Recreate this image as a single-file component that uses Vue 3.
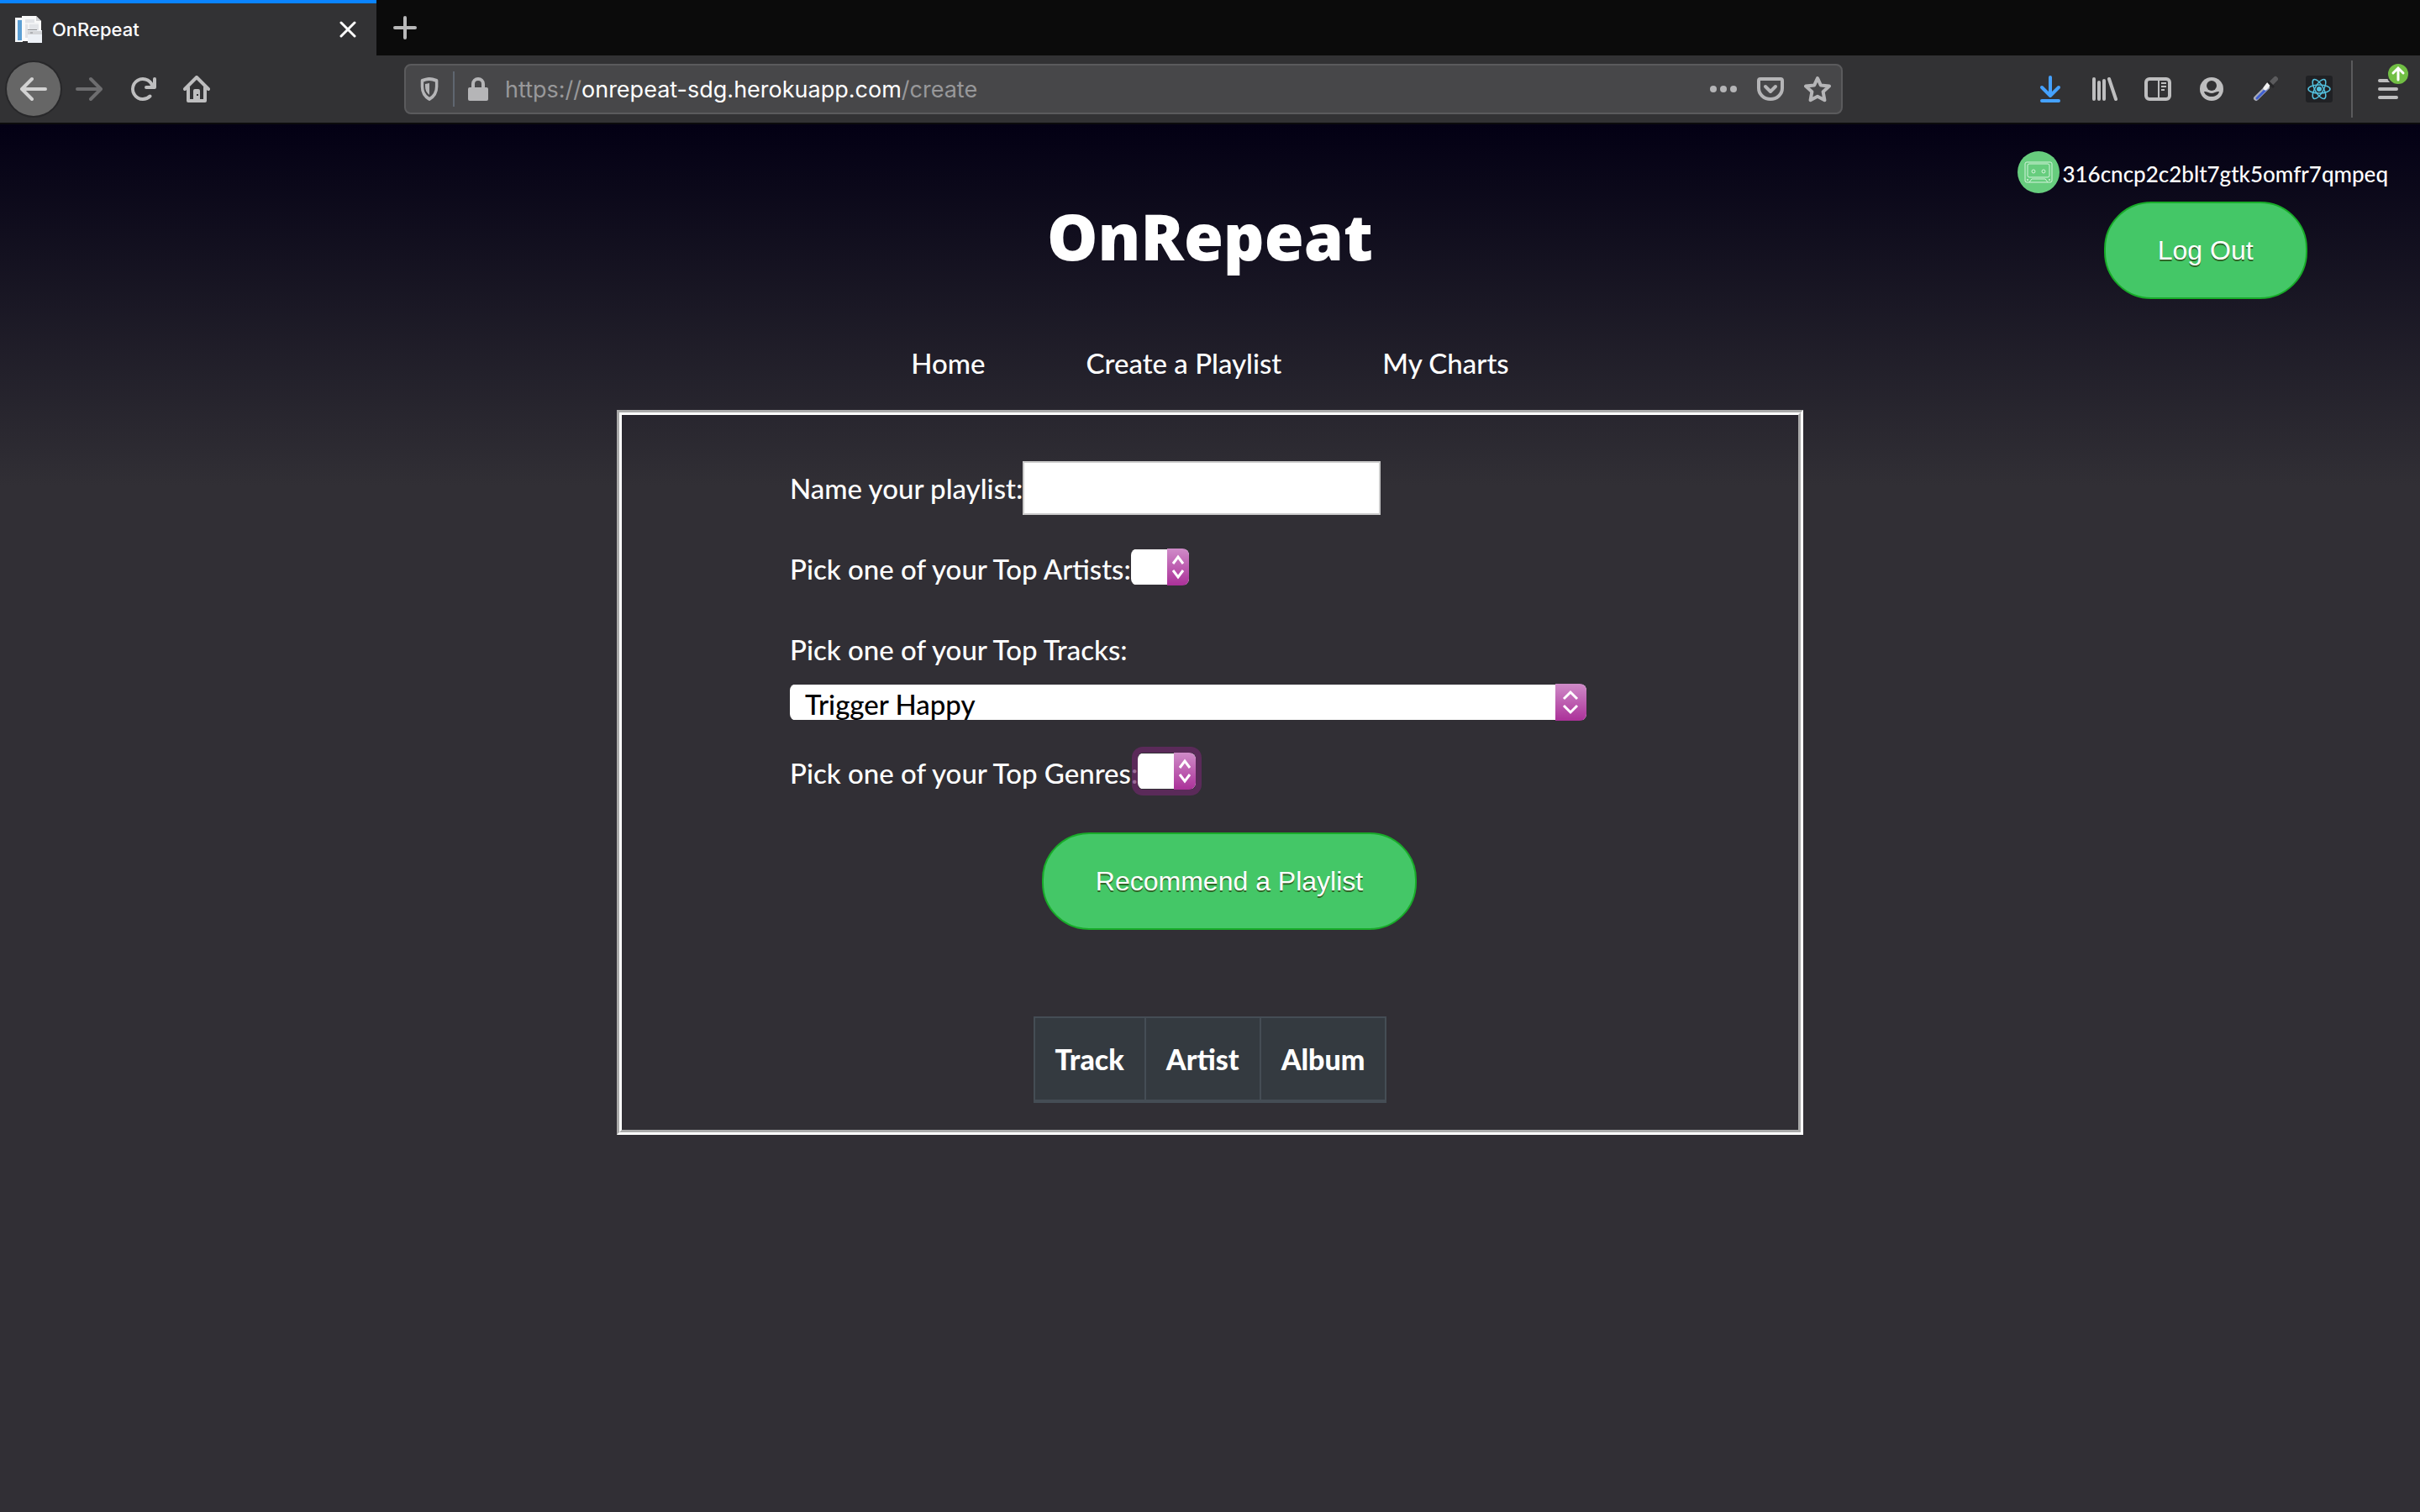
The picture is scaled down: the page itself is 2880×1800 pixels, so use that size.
<script setup>
import { ref } from 'vue'

const playlistName = ref('')
const artist = ref('')
const track = ref('Trigger Happy')
const genre = ref('')
const columns = ['Track', 'Artist', 'Album']
const links = ['Home', 'Create a Playlist', 'My Charts']
</script>

<template>
  <div class="window">
    <div class="tabs">
      <div class="tab">
        <svg class="favicon" viewBox="0 0 32 32">
          <path d="M0 2h9v29H0z" fill="#f4f6f8" />
          <path d="M3 5h5v24H3z" fill="#5b9fd4" />
          <path d="M8 0h17l6 6v24H8z" fill="#fafafa" />
          <path d="M12 4h11v4h5v18H12z" fill="#e2e4e8" />
          <path d="M25 0v6h6z" fill="#cfd0d2" />
          <path d="M16 9v7M12 9h16" stroke="#fff" />
          <path d="M15 17h17v15H15z" fill="#edf1f6" />
          <path d="M15 18h17v4H15z" fill="#d3d5d8" />
          <path d="M15 16.500h11M18 20h3" stroke="#8c8e90" />
        </svg>
        <span class="tab-title">OnRepeat</span>
        <button class="plain close" aria-label="Close tab">
          <svg viewBox="0 0 20 20"><path d="M2 2l16 16M18 2 2 18" stroke="#fff" stroke-width="3" stroke-linecap="round" /></svg>
        </button>
      </div>
      <button class="plain new-tab" aria-label="New tab">
        <svg viewBox="0 0 28 28"><path d="M14 2v24M2 14h24" stroke="#b8b8b9" stroke-width="4" stroke-linecap="round" /></svg>
      </button>
    </div>

    <div class="toolbar">
      <button class="plain tool back" aria-label="Back">
        <svg class="line" viewBox="0 0 16 16"><path d="M15 8H1.500M7 2 1 8l6 6" /></svg>
      </button>
      <button class="plain tool forward" aria-label="Forward">
        <svg class="line" viewBox="0 0 16 16"><path d="M1 8h13.500M9 2l6 6-6 6" /></svg>
      </button>
      <button class="plain tool" aria-label="Reload">
        <svg viewBox="0 0 16 16"><path fill="currentColor" d="M15 1a1 1 0 0 0-1 1v2.418A6.995 6.995 0 1 0 8 15a6.954 6.954 0 0 0 4.950-2.050 1 1 0 0 0-1.414-1.414A5.019 5.019 0 1 1 12.549 6H10a1 1 0 0 0 0 2h5a1 1 0 0 0 1-1V2a1 1 0 0 0-1-1z" /></svg>
      </button>
      <button class="plain tool" aria-label="Home">
        <svg class="line" viewBox="0 0 16 16">
          <path d="M1 8l7-7 7 7M3 7v8h10V7" />
          <path d="M6 15V9a1 1 0 0 1 1-1h2a1 1 0 0 1 1 1v6z" fill="currentColor" stroke="none" />
          <path d="M8 11h1v1H8z" fill="#323234" stroke="none" />
        </svg>
      </button>

      <div class="address">
        <button class="plain small shield" aria-label="Tracking protection">
          <svg viewBox="0 0 28 28">
            <path d="M14 2c4 0 7 1 10 2v7c0 7-4 12-10 15C8 23 4 18 4 11V4c3-1 6-2 10-2z" transform="translate(2 0) scale(.86 1)" fill="none" stroke="currentColor" stroke-width="4" stroke-linejoin="round" />
            <path d="M14 7v14c-3-2-5-6-5-10V8z" fill="currentColor" />
          </svg>
        </button>
        <button class="plain small lock" aria-label="Site information">
          <svg viewBox="0 0 28 28">
            <path d="M8 14V8a6 6 0 0 1 12 0v6" fill="none" stroke="currentColor" stroke-width="4" />
            <rect x="2" y="12" width="24" height="16" rx="2" fill="currentColor" />
          </svg>
        </button>
        <div class="url" role="textbox" aria-label="Address">https://<b>onrepeat-sdg.herokuapp.com</b>/create</div>
        <button class="plain small" aria-label="Page actions">
          <svg class="wide" viewBox="0 0 32 32"><circle cx="4" cy="16" r="4" /><circle cx="16" cy="16" r="4" /><circle cx="28" cy="16" r="4" /></svg>
        </button>
        <button class="plain small" aria-label="Save to Pocket">
          <svg class="line wide" viewBox="0 0 16 16"><path d="M2 2h12a1 1 0 0 1 1 1v4.500a7 6.500 0 0 1-14 0V3a1 1 0 0 1 1-1zM5 6.500l3 3 3-3" /></svg>
        </button>
        <button class="plain small" aria-label="Bookmark">
          <svg class="line wide" viewBox="0 0 16 16"><path d="M8 1.500l1.900 4.200 5.100.6-3.700 3.300.9 5L8 12.400l-4.200 2.200.9-5L1 6.300l5.100-.6z" /></svg>
        </button>
      </div>

      <button class="plain tool download" aria-label="Downloads">
        <svg class="line" viewBox="0 0 16 16"><path d="M8 1v11M3 7l5 5 5-5M3 15h10" /></svg>
      </button>
      <button class="plain tool" aria-label="Library">
        <svg class="line" viewBox="0 0 16 16"><path d="M2 2v12M5 4v10M8 3v11M11 2l4 12" /></svg>
      </button>
      <button class="plain tool" aria-label="Sidebars">
        <svg viewBox="0 0 32 32" fill="none" stroke="currentColor">
          <rect x="2" y="4" width="28" height="24" rx="4" stroke-width="4" />
          <path d="M17 4v24M20 9h6M20 13h6M20 17h4" stroke-width="2" />
        </svg>
      </button>
      <button class="plain tool" aria-label="Account">
        <svg viewBox="0 0 32 32">
          <circle cx="16" cy="16" r="14" fill="currentColor" />
          <circle cx="16" cy="12" r="6" fill="#323234" />
          <path d="M7 19c2 0 3 0 5 1q4 2 8 0c2-1 3-1 5-1-1 4-5 6-9 6s-8-2-9-6z" fill="#323234" />
        </svg>
      </button>
      <button class="plain tool" aria-label="Color picker">
        <svg viewBox="0 0 32 32" stroke-linecap="round">
          <path d="M5 27 18 14" stroke="#a9acb8" stroke-width="6" />
          <path d="M6 27 17 16" stroke="#3f5fd0" stroke-width="3" />
          <path d="M16 15l3-4" stroke="#f1f1f1" stroke-width="5" />
          <path d="M23 9l5-5" stroke="#5b5b5d" stroke-width="6" />
          <path d="M20 8l5 5" stroke="#252527" stroke-width="3" />
        </svg>
      </button>
      <button class="plain tool" aria-label="React Developer Tools">
        <svg viewBox="0 0 32 32">
          <rect width="32" height="32" rx="3" fill="#202124" />
          <g fill="none" stroke="#53c1de" stroke-width="1.500">
            <ellipse cx="16" cy="16" rx="13" ry="5" />
            <ellipse cx="16" cy="16" rx="13" ry="5" transform="rotate(60 16 16)" />
            <ellipse cx="16" cy="16" rx="13" ry="5" transform="rotate(120 16 16)" />
          </g>
          <circle cx="16" cy="16" r="3" fill="#53c1de" />
        </svg>
      </button>
      <button class="plain menu" aria-label="Open menu">
        <svg viewBox="0 0 24 28"><path d="M2 4h20M2 14h20M2 24h20" stroke="currentColor" stroke-width="4" stroke-linecap="round" /></svg>
        <svg class="update" viewBox="0 0 28 28">
          <circle cx="14" cy="14" r="13" fill="#71bf44" stroke="#323234" stroke-width="2" />
          <path d="M14 21V8M8 13l6-6 6 6" fill="none" stroke="#fff" stroke-width="3" stroke-linecap="round" />
        </svg>
      </button>
    </div>

    <div class="page">
      <header class="header">
        <h1>OnRepeat</h1>
        <div class="account">
          <div class="user">
            <svg viewBox="0 0 50 50">
              <circle cx="25" cy="25" r="25" fill="#67cd7e" />
              <g fill="none" stroke="#d5f3dc">
                <rect x="9" y="13" width="32" height="24" rx="2" />
                <rect x="12" y="15" width="26" height="16" rx="2" />
                <circle cx="19" cy="24" r="2" /><circle cx="31" cy="24" r="2" />
                <path d="M14 37l3-4h16l3 4" />
              </g>
              <circle cx="12" cy="34" r="1" fill="#d5f3dc" /><circle cx="38" cy="34" r="1" fill="#d5f3dc" />
            </svg>
            <span>316cncp2c2blt7gtk5omfr7qmpeq</span>
          </div>
          <button class="pill">Log Out</button>
        </div>
      </header>

      <nav class="nav">
        <a v-for="link in links" :key="link" href="#">{{ link }}</a>
      </nav>

      <main class="panel">
        <div class="panel-inner">
          <form class="form" @submit.prevent>
            <div class="row">
              <label for="name">Name your playlist:</label>
              <input id="name" v-model="playlistName" type="text" />
            </div>
            <div class="row">
              <label for="artist">Pick one of your Top Artists:</label>
              <span class="select">
                <select id="artist" v-model="artist"><option value=""></option></select>
                <svg viewBox="0 0 26 44"><path d="M7 18l6-8 6 8M7 26l6 8 6-8" /></svg>
              </span>
            </div>
            <div class="row stacked">
              <label for="track">Pick one of your Top Tracks:</label>
              <span class="select large">
                <select id="track" v-model="track"><option>Trigger Happy</option></select>
                <svg viewBox="0 0 37 44"><path d="M10 18l8-8 8 8M10 26l8 8 8-8" /></svg>
              </span>
            </div>
            <div class="row">
              <label for="genre">Pick one of your Top Genres:</label>
              <span class="select focused">
                <select id="genre" v-model="genre"><option value=""></option></select>
                <svg viewBox="0 0 26 44"><path d="M7 18l6-8 6 8M7 26l6 8 6-8" /></svg>
              </span>
            </div>
            <button class="pill submit">Recommend a Playlist</button>
          </form>

          <table>
            <thead>
              <tr><th v-for="column in columns" :key="column" scope="col">{{ column }}</th></tr>
            </thead>
          </table>
        </div>
      </main>
    </div>
  </div>
</template>

<style>
body {
  margin: 0;
  background: #312f35;
}
</style>

<style scoped>
* {
  box-sizing: border-box;
}
.window {
  display: flex;
  flex-direction: column;
  min-height: 100vh;
  color: #fff;
  font-family: "Lato Medium", Lato, sans-serif;
  font-size: 33px;
  font-weight: 500;
  line-height: 40px;
}
svg {
  display: block;
  flex: none;
}
.plain {
  display: flex;
  align-items: center;
  justify-content: center;
  padding: 0;
  border: 0;
  background: none;
  color: inherit;
}
.tabs {
  display: flex;
  height: 66px;
  background: #0b0b0b;
}
.tab {
  display: flex;
  align-items: center;
  width: 448px;
  padding: 0 24px 0 18px;
  border-top: 4px solid #0a84ff;
  background: #323234;
  font-family: Inter, sans-serif;
  font-size: 22px;
}
.favicon {
  width: 32px;
  height: 32px;
  margin-right: 12px;
}
.tab-title {
  flex: 1;
}
.close svg {
  width: 20px;
  height: 20px;
}
.new-tab {
  width: 68px;
}
.new-tab svg {
  width: 28px;
  height: 28px;
}
.toolbar {
  display: flex;
  align-items: center;
  height: 82px;
  padding: 0 8px;
  border-bottom: 2px solid #0c0c0d;
  background: #323234;
  color: #bebebf;
}
.tool {
  width: 64px;
  height: 64px;
}
.tool svg {
  width: 32px;
  height: 32px;
}
.line {
  fill: none;
  stroke: currentColor;
  stroke-width: 2;
  stroke-linecap: round;
  stroke-linejoin: round;
}
.back {
  margin-right: 2px;
  border-radius: 50%;
  background: #666;
  color: #d2d2d2;
  box-shadow: 0 0 0 2px #28282a;
}
.forward {
  color: #6d6d6f;
}
.download {
  color: #45a1ff;
}
.address {
  display: flex;
  flex: 1;
  align-items: center;
  height: 60px;
  margin: 0 215px;
  border: 2px solid #5b5b5d;
  border-radius: 8px;
  background: #474749;
  color: #b5b5b7;
}
.small {
  width: 56px;
  height: 56px;
}
.small svg {
  width: 28px;
  height: 28px;
}
.small .wide {
  width: 32px;
  height: 32px;
  stroke-width: 2;
}
.small circle {
  fill: currentColor;
  stroke: none;
}
.shield {
  height: 42px;
  width: 58px;
  border-right: 2px solid #5f6670;
}
.url {
  flex: 1;
  padding: 2px 0 0 4px;
  color: #98989a;
  font-family: Inter, sans-serif;
  font-size: 27px;
  font-weight: 400;
}
.url b {
  color: #fff;
  font-weight: 400;
}
.menu {
  position: relative;
  width: 74px;
  height: 68px;
  margin-left: 6px;
  padding-left: 12px;
  border-left: 2px solid #5b5b5d;
}
.menu svg {
  width: 24px;
  height: 28px;
}
.menu .update {
  position: absolute;
  top: 2px;
  right: 4px;
  width: 28px;
}
.page {
  flex: 1;
  padding-bottom: 64px;
  background: linear-gradient(#030014, #312f35 26%);
}
.header {
  display: grid;
  grid-template-columns: 1fr auto 1fr;
}
h1 {
  grid-column: 2;
  margin: 85px 0 0;
  font-family: "Open Sans", sans-serif;
  font-size: 76px;
  font-weight: 800;
  line-height: 96px;
}
.account {
  display: flex;
  flex-direction: column;
  align-items: center;
  justify-self: end;
  gap: 10px;
  padding: 32px 32px 0 0;
}
.user {
  display: flex;
  align-items: center;
  gap: 3px;
  height: 50px;
  padding-right: 6px;
  font-size: 26px;
}
.user span {
  padding-top: 4px;
}
.user svg {
  width: 50px;
  height: 50px;
}
.pill {
  padding: 38px 62px;
  border: 2px solid #18ab29;
  border-radius: 56px;
  background: #44c767;
  color: #fff;
  font-family: "Liberation Sans", sans-serif;
  font-size: 32px;
  font-weight: 400;
  line-height: 36px;
  text-shadow: 0 2px 0 #2f6627;
}
.nav {
  display: flex;
  justify-content: center;
  gap: 120px;
  padding: 56px 0 36px;
}
.nav a {
  color: inherit;
  text-decoration: none;
}
.panel {
  width: 90%;
  max-width: 1412px;
  margin: 0 auto;
  border: 3px solid;
  border-color: #aaa #fff #fff #aaa;
}
.panel-inner {
  padding: 55px 0 32px;
  border: 3px solid;
  border-color: #fff #aaa #aaa #fff;
}
.form {
  display: flex;
  flex-direction: column;
  gap: 32px;
  max-width: 1046px;
  margin-left: 200px;
}
.row {
  display: flex;
  align-items: center;
  height: 64px;
}
.stacked {
  flex-direction: column;
  align-items: flex-start;
  gap: 21px;
  height: auto;
  margin-bottom: -2px;
  padding-top: 12px;
}
input {
  width: 426px;
  height: 64px;
  padding: 0 16px;
  border: 2px solid #ccc;
  background: #fff;
  font: inherit;
}
.select {
  position: relative;
  width: 69px;
  height: 44px;
  margin-bottom: 4px;
}
.select select {
  display: block;
  width: 100%;
  height: 44px;
  padding: 4px 36px 0 18px;
  border: 0;
  border-radius: 8px;
  outline: 0;
  appearance: none;
  background: linear-gradient(#fff, #fff) 0 1px / 100% 42px no-repeat;
  color: #000;
  font: inherit;
}
.select svg {
  position: absolute;
  top: 0;
  right: 0;
  width: 26px;
  height: 44px;
  border-radius: 0 8px 8px 0;
  background: linear-gradient(#cf8bc8, #ab3199);
  fill: none;
  stroke: #fff;
  stroke-width: 3;
  pointer-events: none;
}
.select.large {
  width: 948px;
  margin-bottom: 0;
}
.large svg {
  width: 37px;
}
.focused {
  border-radius: 6px;
  box-shadow: 0 0 0 7px #6d296ab0;
}
.submit {
  align-self: center;
  margin-top: 7px;
}
table {
  margin: 103px auto 0;
  border-collapse: collapse;
}
th {
  padding: 29px 24px 28px;
  border: 2px solid #454d55;
  border-bottom-width: 4px;
  background: #343a40;
  font-family: "Lato Black", Lato, sans-serif;
  font-size: 34px;
  font-weight: 900;
}
</style>
